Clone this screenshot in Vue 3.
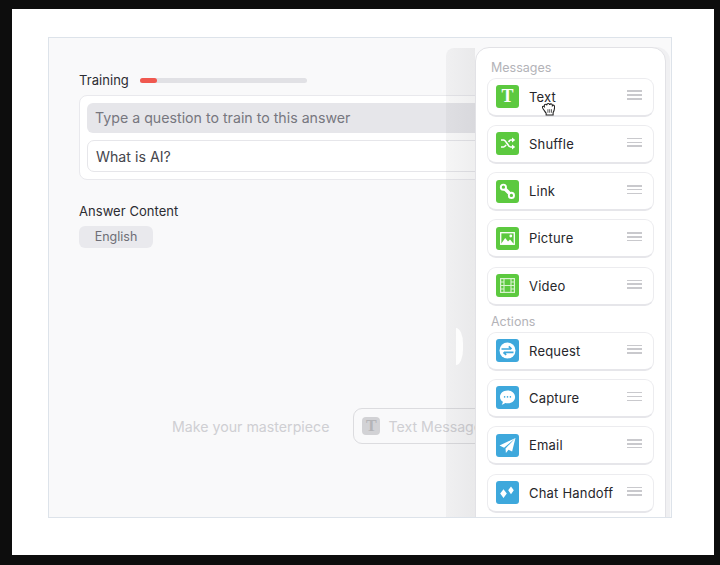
<template>
  <div class="page">
    <div class="frame">
      <div class="stage">
        <!-- left side, runs under the panel -->
        <div class="training-row">
          <span class="label">Training</span>
          <div class="progress"><div class="progress-fill" :style="{ width: progress + '%' }"></div></div>
        </div>
        <div class="question-box">
          <div class="question-input">Type a question to train to this answer</div>
          <div class="question-value">What is AI?</div>
        </div>
        <div class="label answer-label">Answer Content</div>
        <div class="lang-pill">English</div>

        <div class="drop-row">
          <span class="drop-hint">Make your masterpiece</span>
          <div class="ghost-block">
            <span class="ghost-icon">T</span>
            <span class="ghost-text">Text Message</span>
          </div>
        </div>

        <!-- collapsed strip next to the panel -->
        <div class="strip"><div class="strip-handle"></div></div>

        <aside class="panel">
          <div v-for="group in groups" :key="group.title" class="group">
            <div class="group-title">{{ group.title }}</div>
            <div class="cards">
              <div v-for="item in group.items" :key="item.name" class="card">
                <span class="icon" :class="group.color">
                  <span v-if="item.icon === 'text'" class="icon-t">T</span>
                  <svg v-else-if="item.icon === 'shuffle'" viewBox="0 0 23 23" width="23" height="23">
                    <path d="M5 8h2.6c2.6 0 4.4 7 7 7h1.6M5 15h2.6c1 0 1.8-1 2.5-2.1M12.6 10c.6-1 1.2-2 2-2h1.6" fill="none" stroke="#fff" stroke-width="1.6" />
                    <path d="M16 5.4 19.2 8 16 10.6zM16 12.4l3.2 2.6-3.2 2.6z" fill="#fff" />
                  </svg>
                  <svg v-else-if="item.icon === 'link'" viewBox="0 0 23 23" width="23" height="23">
                    <path d="M8 8l7 7" stroke="#fff" stroke-width="3.4" />
                    <circle cx="7.4" cy="7.2" r="2.6" fill="#5cc93f" stroke="#fff" stroke-width="1.9" />
                    <circle cx="15.4" cy="15.4" r="2.6" fill="#5cc93f" stroke="#fff" stroke-width="1.9" />
                  </svg>
                  <svg v-else-if="item.icon === 'picture'" viewBox="0 0 23 23" width="23" height="23">
                    <rect x="4.7" y="5.7" width="13.6" height="11.6" fill="none" stroke="#fff" stroke-width="1.3" />
                    <path d="M5 17l4.2-6 2.8 3.4 2-2 3.8 4.6z" fill="#fff" />
                    <circle cx="14.8" cy="9" r="1.4" fill="#fff" />
                  </svg>
                  <svg v-else-if="item.icon === 'video'" viewBox="0 0 23 23" width="23" height="23">
                    <rect x="4.6" y="4.6" width="13.8" height="13.8" fill="none" stroke="#d9f3cf" stroke-width="1.2" />
                    <path d="M8 5v13M15 5v13M8 11.5h7M5 8h3M5 11.5h3M5 15h3M15 8h3M15 11.5h3M15 15h3" stroke="#d9f3cf" stroke-width="1.1" />
                  </svg>
                  <svg v-else-if="item.icon === 'request'" viewBox="0 0 23 23" width="23" height="23">
                    <circle cx="11.5" cy="11.5" r="8" fill="#fff" />
                    <path d="M5.500 10h9.500M12.800 7.400 15.600 10M17.500 13.300H8M10.200 15.900l-2.800-2.600" fill="none" stroke="#3ea8dc" stroke-width="1.7" />
                  </svg>
                  <svg v-else-if="item.icon === 'capture'" viewBox="0 0 23 23" width="23" height="23">
                    <path d="M11.5 4.5c4.3 0 7.6 2.8 7.6 6.4s-3.3 6.4-7.6 6.4c-.8 0-1.5-.1-2.2-.3-1 .9-2.3 1.5-3.6 1.6.7-.8 1.1-1.7 1.2-2.8-1.7-1.1-2.9-2.9-2.9-4.9 0-3.6 3.2-6.4 7.5-6.4z" fill="#fff" />
                    <circle cx="8.6" cy="10.9" r=".8" fill="#3ea8dc" />
                    <circle cx="11.5" cy="10.9" r=".8" fill="#3ea8dc" />
                    <circle cx="14.4" cy="10.9" r=".8" fill="#3ea8dc" />
                  </svg>
                  <svg v-else-if="item.icon === 'email'" viewBox="0 0 23 23" width="23" height="23">
                    <path d="M19.5 4 3.5 11.5l4.6 2.2zM19.500 4 9.500 14.600l.4 4.400 2.600-3.200 3.600 1.800z" fill="#fff" />
                  </svg>
                  <svg v-else viewBox="0 0 23 23" width="23" height="23">
                    <path d="M7.500 8.200l3.300 4.400-3.300 4.400-3.300-4.400zM15 5.400l2.800 3.900-2.800 3.900-2.800-3.900z" fill="#fff" />
                  </svg>
                </span>
                <span class="card-name">{{ item.name }}</span>
                <span class="grip"><i></i><i></i><i></i></span>
              </div>
            </div>
          </div>
        </aside>

        <!-- grabbing cursor over the first card -->
        <svg class="cursor" viewBox="1 2 11 12.500" width="13" height="15">
          <path d="M2.500 8.500c-.8-1-1.600-2.200-.9-2.800.5-.4 1-.2 1.400.2-.2-1.200.2-2 .9-2.100.6-.1 1 .3 1.200.8 0-1 .5-1.500 1.200-1.500s1.100.5 1.200 1.300c.2-.7.700-1 1.300-.9.700.1 1 .7 1 1.500.3-.4.800-.5 1.200-.3.600.3.700 1 .6 2-.1 1.600-.5 3-1.200 4.200v2H4.500v-1.600C3.800 10.500 3.200 9.500 2.500 8.500z" fill="#fff" stroke="#222" stroke-width=".9" />
          <path d="M6 8v3M7.500 8v3M9 8v3" stroke="#555" stroke-width=".8" />
        </svg>
      </div>
    </div>
  </div>
</template>

<script setup>
const progress = 10

const groups = [
  {
    title: 'Messages',
    color: 'green',
    items: [
      { name: 'Text', icon: 'text' },
      { name: 'Shuffle', icon: 'shuffle' },
      { name: 'Link', icon: 'link' },
      { name: 'Picture', icon: 'picture' },
      { name: 'Video', icon: 'video' },
    ],
  },
  {
    title: 'Actions',
    color: 'blue',
    items: [
      { name: 'Request', icon: 'request' },
      { name: 'Capture', icon: 'capture' },
      { name: 'Email', icon: 'email' },
      { name: 'Chat Handoff', icon: 'handoff' },
    ],
  },
]
</script>

<style>
body {
  background: #0d0d0d;
}
</style>

<style scoped>
.page {
  box-sizing: border-box;
  width: 720px;
  height: 565px;
  padding: 9px 6px 10px 12px;
  font-family: Inter, 'Liberation Sans', sans-serif;
}

.frame {
  height: 100%;
  background: #fff;
  padding: 28px 0 0 36px;
  box-sizing: border-box;
}

.stage {
  position: relative;
  box-sizing: border-box;
  width: 624px;
  height: 481px;
  padding: 34px 0 0 30px;
  background: #f9f9fa;
  border: 1px solid #dde3ea;
  overflow: hidden;
}

.training-row {
  display: flex;
  align-items: center;
  gap: 11px;
  height: 16px;
}

.label {
  font-size: 13px;
  line-height: 16px;
  letter-spacing: 0.05px;
  color: #2c2c32;
}

.progress {
  width: 167px;
  height: 5px;
  border-radius: 3px;
  background: #e1e1e5;
}

.progress-fill {
  height: 100%;
  border-radius: 3px;
  background: #f0584f;
}

.question-box {
  box-sizing: border-box;
  width: 460px;
  height: 85px;
  margin-top: 7px;
  padding: 7px;
  background: #fff;
  border: 1px solid #e9e9ed;
  border-radius: 8px;
  display: flex;
  flex-direction: column;
  gap: 7px;
}

.question-input {
  height: 30px;
  padding-left: 8px;
  line-height: 30px;
  font-size: 14.200px;
  color: #77777f;
  background: #e6e6ea;
  border-radius: 6px;
}

.question-value {
  box-sizing: border-box;
  height: 32px;
  padding-left: 8px;
  line-height: 31px;
  font-size: 14.200px;
  color: #45454c;
  background: #fff;
  border: 1px solid #e6e6ea;
  border-radius: 7px;
}

.answer-label {
  margin-top: 23px;
}

.lang-pill {
  width: 74px;
  height: 22px;
  margin-top: 7px;
  line-height: 22px;
  text-align: center;
  font-size: 12.500px;
  color: #6e6e76;
  background: #e9e9ed;
  border-radius: 6px;
}

.drop-row {
  display: flex;
  align-items: center;
  gap: 24px;
  margin: 160px 0 0 93px;
  width: 500px;
}

.drop-hint {
  font-size: 14.200px;
  color: #cfcfd3;
  white-space: nowrap;
}

.ghost-block {
  box-sizing: border-box;
  display: flex;
  align-items: center;
  gap: 8px;
  width: 160px;
  height: 36px;
  padding-left: 8px;
  border: 1px solid #dcdcdf;
  border-radius: 9px;
}

.ghost-icon {
  width: 18px;
  height: 18px;
  line-height: 18px;
  text-align: center;
  font-family: 'Liberation Serif', serif;
  font-weight: 700;
  font-size: 16px;
  color: #b4b4b7;
  background: #d2d2d5;
  border-radius: 4px;
}

.ghost-text {
  font-size: 14.200px;
  color: #cfcfd3;
  white-space: nowrap;
}

.strip {
  position: absolute;
  left: 397px;
  top: 10px;
  bottom: 0;
  width: 29px;
  background: linear-gradient(90deg, rgba(120, 120, 125, 0.07), rgba(120, 120, 125, 0.12));
  border-radius: 8px 0 0 0;
}

.strip-handle {
  position: absolute;
  left: 10px;
  top: 280px;
  width: 7px;
  height: 37px;
  background: #fdfdfd;
  border-radius: 0 8px 8px 0 / 0 18px 18px 0;
}

.panel {
  position: absolute;
  left: 426px;
  top: 9px;
  bottom: -14px;
  box-sizing: border-box;
  width: 191px;
  padding: 11.500px 11px 0;
  background: #fff;
  border: 1px solid #e2e2e6;
  border-radius: 14px;
  box-shadow: 4px 0 0 #f0f0f2;
}

.group + .group {
  margin-top: 8px;
}

.group-title {
  height: 16px;
  padding-left: 4px;
  font-size: 12.500px;
  line-height: 16px;
  color: #b3b3b8;
}

.cards {
  display: flex;
  flex-direction: column;
  gap: 8.300px;
  margin-top: 2px;
}

.card {
  box-sizing: border-box;
  display: flex;
  align-items: center;
  height: 39px;
  padding: 0 11px 0 8px;
  background: #fff;
  border: 1px solid #ececef;
  border-bottom: 2px solid #e6e6ea;
  border-radius: 9px;
}

.icon {
  display: flex;
  align-items: center;
  justify-content: center;
  flex: none;
  width: 23px;
  height: 23px;
  border-radius: 3px;
}

.icon.green {
  background: #5cc93f;
}

.icon.blue {
  background: #3ea8dc;
}

.icon-t {
  font-family: 'Liberation Serif', serif;
  font-weight: 700;
  font-size: 18px;
  line-height: 23px;
  color: #fff;
}

.card-name {
  flex: 1;
  margin-left: 10px;
  font-size: 13px;
  letter-spacing: 0.2px;
  color: #26262b;
}

.grip {
  display: flex;
  flex-direction: column;
  gap: 2.300px;
  width: 15px;
  margin-top: -3px;
}

.grip i {
  display: block;
  height: 1.500px;
  background: #c9c9cd;
}

.cursor {
  position: absolute;
  left: 493px;
  top: 64px;
}
</style>
